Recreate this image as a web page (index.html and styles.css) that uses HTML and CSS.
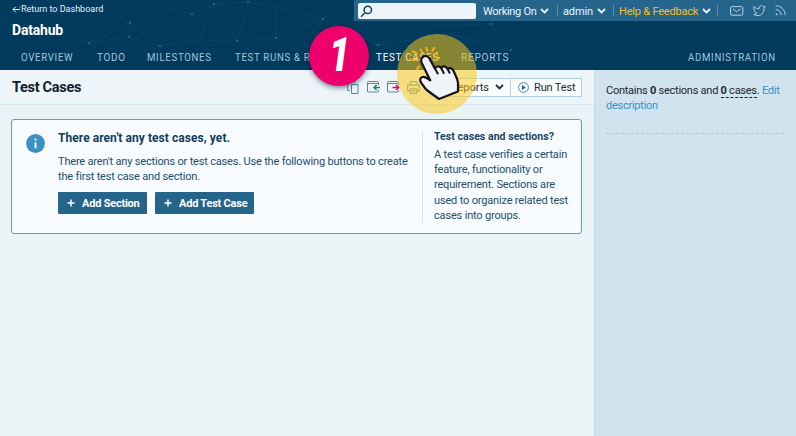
FILE: index.html
```html
<!DOCTYPE html>
<html lang="en">
<head>
<meta charset="utf-8">
<title>Test Cases - Datahub</title>
<link rel="stylesheet" href="styles.css">
</head>
<body>
<header class="header">
  <svg class="mesh" width="796" height="70" viewBox="0 0 796 70">
    <path d="M0 18L20 7 47 0M20 7L64 0 89 43 42 31 0 22M18 18L60 13 89 43 130 23 99 0M60 13L100 8 130 23 129 37 89 43M129 37L160 46 192 14 137 2 130 23 160 46M192 14L214 4 248 2 276 7 276 38 237 41 200 40 160 46M192 14L237 41 214 4 200 40M276 7L323 19 298 51 276 38 323 19 350 0M248 2L237 41 283 70 298 51M323 19L378 45 354 30M378 45L420 26 491 24 511 50 450 34 378 45M491 24L460 46"/>
    <g><circle cx="20" cy="7" r="1"/><circle cx="89" cy="43" r="1"/><circle cx="130" cy="23" r="1"/><circle cx="129" cy="37" r="1"/><circle cx="160" cy="46" r="1"/><circle cx="192" cy="14" r="1"/><circle cx="214" cy="4" r="1"/><circle cx="248" cy="2" r="1"/><circle cx="276" cy="38" r="1"/><circle cx="237" cy="41" r="1"/><circle cx="323" cy="19" r="1"/><circle cx="378" cy="45" r="1"/><circle cx="491" cy="24" r="1"/><circle cx="511" cy="50" r="1"/></g>
  </svg>
  <div class="head-row">
    <div class="brand">
      <a class="return"><svg width="8" height="7" viewBox="0 0 8 7"><path d="M8 3.5H1M3.8 .7L1 3.5l2.8 2.8"/></svg><span>Return to Dashboard</span></a>
      <div class="project">Datahub</div>
    </div>
    <div class="topbar">
      <div class="search"><svg width="13" height="13" viewBox="0 0 13 13"><circle cx="7.8" cy="4.9" r="3.7"/><path d="M5 7.8L1 11.8"/></svg></div>
      <div class="menu working"><span>Working On</span><svg class="chev" width="9" height="6" viewBox="0 0 9 6"><path d="M1 1l3.5 3.5L8 1"/></svg></div>
      <div class="menu admin"><span>admin</span><svg class="chev" width="9" height="6" viewBox="0 0 9 6"><path d="M1 1l3.5 3.5L8 1"/></svg></div>
      <div class="menu help"><span>Help &amp; Feedback</span><svg class="chev" width="9" height="6" viewBox="0 0 9 6"><path d="M1 1l3.5 3.5L8 1"/></svg></div>
      <div class="social">
        <svg width="14" height="10" viewBox="0 0 14 10"><rect x=".6" y=".6" width="12.2" height="8.6" rx="1.3"/><path d="M3 3l3.7 2.7L10.4 3"/></svg>
        <svg width="13" height="12" viewBox="0 0 13 12"><path d="M.9 1.4c1.4 1.8 3.1 2.4 5.1 2.4C5.6 1.5 7 .7 8.3.7c1 0 1.600.4 2.100 1l1.800-.3-1.200 2c.1 4.100-2.600 7.200-6.200 7.200-1.600 0-2.900-.4-4-1.200 1.400 0 2.400-.4 3.200-1.100C1.400 7.400.2 4.600.9 1.400z"/></svg>
        <svg width="11" height="11" viewBox="0 0 11 11"><path d="M.6.700c5.400 0 9.500 4.100 9.500 9.500M.6 4.600c3.200 0 5.600 2.400 5.600 5.600"/><circle cx="1.700" cy="9.300" r=".9"/></svg>
      </div>
    </div>
  </div>
  <nav class="nav">
    <a class="n1"><span>OVERVIEW</span></a><a class="n2"><span>TODO</span></a><a class="n3"><span>MILESTONES</span></a><a class="n4"><span>TEST RUNS &amp; RESULTS</span></a><a class="n5 active"><span>TEST CASES</span></a><a class="n6"><span>REPORTS</span></a><a class="n7"><span>ADMINISTRATION</span></a>
  </nav>
</header>
<div class="page">
  <main class="main">
    <div class="title-row">
      <h1>Test Cases</h1>
      <div class="tools">
        <svg width="12" height="13" viewBox="0 0 12 13"><path d="M4.500 3.500h6.500v9h-6.500zM2.800 9.500H.8V.7h7v1.200"/></svg>
        <svg width="13" height="12" viewBox="0 0 13 12"><path d="M11.500 4V1.500a1 1 0 0 0-1-1h-9a1 1 0 0 0-1 1v8.500a1 1 0 0 0 1 1h9a1 1 0 0 0 1-1V9M.5 2.500h11"/><path class="green" d="M13 6.500H7.500M9.600 4L7 6.500 9.600 9"/></svg>
        <svg width="13" height="12" viewBox="0 0 13 12"><path d="M11.500 4V1.500a1 1 0 0 0-1-1h-9a1 1 0 0 0-1 1v8.500a1 1 0 0 0 1 1h9a1 1 0 0 0 1-1V9M.5 2.500h11"/><path class="pink" d="M5.500 6.500h5.500M9 4l2.600 2.500L9 9"/></svg>
        <svg width="13" height="13" viewBox="0 0 13 13"><path d="M3 4V.700h7V4M3 10H.7V4h11.600v6H10M3 8h7v4.300H3zM4.500 10h4"/></svg>
      </div>
      <div class="actions">
        <button class="reports"><span>Reports</span><svg class="chev" width="9" height="6" viewBox="0 0 9 6"><path d="M1 1l3.500 3.500L8 1"/></svg></button>
        <button class="run"><svg width="11" height="11" viewBox="0 0 11 11"><circle cx="5.500" cy="5.500" r="4.900"/><path d="M4 3l3.800 2.500L4 8z"/></svg><span>Run Test</span></button>
      </div>
    </div>
    <section class="notice">
      <svg class="info" width="19" height="19" viewBox="0 0 19 19"><circle cx="9.500" cy="9.500" r="9.400"/><path d="M9.500 8.300v6"/><path d="M9.500 4.600v1.900"/></svg>
      <div class="notice-body">
        <h2>There aren't any test cases, yet.</h2>
        <p>There aren't any sections or test cases. Use the following buttons to create<br>the first test case and section.</p>
        <div class="buttons">
          <button class="add-section"><svg width="8" height="8" viewBox="0 0 8 8"><path d="M4 .5v7M.5 4h7"/></svg><span>Add Section</span></button>
          <button class="add-case"><svg width="8" height="8" viewBox="0 0 8 8"><path d="M4 .5v7M.5 4h7"/></svg><span>Add Test Case</span></button>
        </div>
      </div>
      <aside class="hint">
        <h3>Test cases and sections?</h3>
        <p>A test case verifies a certain<br>feature, functionality or<br>requirement. Sections are<br>used to organize related test<br>cases into groups.</p>
      </aside>
    </section>
  </main>
  <aside class="sidebar">
    <p>Contains <b>0</b> sections and <span class="count"><b>0</b> cases</span>. <a>Edit<br>description</a></p>
  </aside>
</div>
<div class="halo"></div>
<svg class="pointer" width="50" height="56" viewBox="0 0 50 56">
  <path class="spark" d="M9 2l3 4M15 0l1.500 4.500M23.500 0L21 4.500M29 11l-5.500-1M1 4l5.500 3M1 13h5.500M5.500 22.500L8.500 19M27 5l-4 2.500"/>
  <path class="hand" d="M12.500 9.500c2.400-1.300 5-.1 6 2.100l5.500 10c.5-2.200 4.100-3.300 6.200-.5 1.100-2.600 4.800-2.300 6.200.7 2.200-1.500 5.100-.5 6.300 2.500l3.500 8c1.600 4 .7 7.500.7 12.200L28 52 15.700 43c-2.300-2-3.500-4.700-5.200-6.800-2-2.800-1.600-5 .4-6 2.300-1.200 4.700.6 8.400 3.200L11 16.500c-1.200-2.500-1-5.600 1.500-7z"/>
  <path class="finger" d="M24 21.500l2.700 5M30.200 21l2.500 5M36.500 21.800l2 4"/>
</svg>
<div class="step"><span>1</span></div>
</body>
</html>
```
FILE: styles.css
```css
* { box-sizing: border-box; margin: 0; padding: 0; }
body { width: 796px; height: 436px; overflow: hidden; position: relative; background: #eaf3f6; font: 11px/15px Roboto, "Liberation Sans", sans-serif; color: #22506c; white-space: nowrap; }
svg { fill: none; stroke: currentColor; flex: none; display: block; }
button { font: inherit; color: inherit; display: flex; align-items: center; }
.header { position: relative; height: 70px; background: #003a5d; color: #fff; }
.mesh { position: absolute; left: 0; top: 0; stroke: #235c79; stroke-width: .5; opacity: .55; }
.mesh g { fill: #5c91ab; stroke: none; }
.head-row { position: relative; display: flex; justify-content: space-between; height: 44px; }
.brand { padding: 3px 0 0 12px; }
.return { display: flex; align-items: center; gap: 1px; font-size: 9px; line-height: 13px; color: #e4f1f8; }
.project { font-size: 14px; font-weight: 700; line-height: 18px; margin-top: 5px; letter-spacing: -.2px; }
.topbar { display: flex; align-items: center; width: 442px; height: 21px; background: #25658c; color: #eaf4f9; padding-left: 4px; }
.search { width: 118px; height: 16px; border-radius: 2px; background: #edf5f9; color: #123f5c; padding: 2px 0 0 2px; stroke-width: 1.5; }
.chev { stroke-width: 1.8; }
.menu { display: flex; align-items: center; justify-content: space-between; height: 13px; line-height: 13px; letter-spacing: -.3px; border-right: 1px solid #5c8ba8; }
.menu span { position: relative; top: 1px; }
.working { width: 75px; margin-left: 7px; padding-right: 8px; }
.admin { width: 51px; margin-left: 5px; padding-right: 7px; letter-spacing: -.15px; }
.help { width: 99px; margin-left: 5px; padding-right: 6px; letter-spacing: -.2px; }
.help span { color: #fabd17; }
.social { display: flex; align-items: center; gap: 9px; margin-left: 12px; color: #b5d3e3; }
.social circle { fill: currentColor; stroke: none; }
.nav { position: relative; display: flex; height: 26px; line-height: 27px; padding-left: 21px; letter-spacing: .8px; color: #a5c5d8; }
.nav span { display: inline-block; transform: scaleX(.875); transform-origin: left; }
.n1 { width: 76px; } .n2 { width: 50px; } .n3 { width: 88px; } .n4 { width: 141px; } .n5 { width: 85px; } .n6 { width: 227px; }
.nav .n6 span { transform: scaleX(.92); }
.nav .n5 span, .nav .n2 span { transform: scaleX(.9); }
.active { color: #fff; }
.page { display: flex; height: 366px; }
.main { width: 595px; border-right: 1px solid #bdd9ec; }
.title-row { display: flex; align-items: center; height: 35px; padding: 0 12px; background: #edf5f8; border-bottom: 1px solid #d2e6f3; }
h1 { font-size: 14.5px; line-height: 18px; font-weight: 700; color: #11212e; flex: 1; letter-spacing: -.3px; padding-top: 2px; }
.tools { display: flex; align-items: center; gap: 7.2px; color: #5386a4; margin-right: 10px; }
.green { stroke: #129064; stroke-width: 1.6; }
.pink { stroke: #ed006b; stroke-width: 1.6; }
.actions { display: flex; height: 19px; border: 1px solid #b2d3e6; background: #fafcfe; color: #232a31; }
.actions button { border: 0; background: none; }
.reports { width: 79px; padding: 0 6px 0 0; justify-content: flex-end; gap: 6px; }
.actions .run { width: 71px; border-left: 1px solid #b2d3e6; padding-left: 7px; gap: 5px; letter-spacing: -.15px; }
.run svg { color: #3c8dbb; }
.run svg path { fill: #22618b; stroke: none; }
.notice { display: flex; width: 571px; height: 115px; margin: 14px 0 0 11px; border: 1px solid #5a9fc5; border-radius: 3px; background: #f8fbff; }
.info { margin: 14px 0 0 14px; fill: #3c91c3; stroke: none; }
.info path { stroke: #e8f5fb; stroke-width: 2; }
.notice-body { width: 377px; padding: 10px 0 0 13px; }
h2 { font-size: 12px; line-height: 16px; color: #123f5c; font-weight: 700; letter-spacing: .06px; }
.notice-body p { margin-top: 8px; letter-spacing: -.18px; }
.buttons { display: flex; gap: 8px; margin-top: 8px; }
.buttons button { height: 22px; border: 0; border-radius: 1px; background: #25658c; color: #fff; font-weight: 700; padding-left: 9px; gap: 7px; letter-spacing: -.22px; }
.buttons svg { stroke-width: 1.5; }
.add-section { width: 89px; } .add-case { width: 99px; }
.hint { height: 92px; margin-top: 11px; border-left: 1px solid #dee3e7; padding-left: 11px; }
h3 { font-size: 10.5px; line-height: 12px; margin-bottom: 4px; color: #174766; letter-spacing: .05px; }
.hint p { line-height: 15.2px; letter-spacing: -.17px; }
.sidebar { width: 201px; background: #d0e3ef; padding: 13px 12px 0 11px; }
.sidebar p { color: #22282d; height: 51px; border-bottom: 1px dashed #b2cad8; letter-spacing: -.25px; }
.sidebar a { color: #3b92c5; }
.count { border-bottom: 1px dashed #222; }
.halo { position: absolute; left: 397px; top: 34px; width: 80px; height: 80px; border-radius: 50%; background: rgba(253, 201, 20, .53); }
.pointer { position: absolute; left: 411px; top: 47px; }
.spark { stroke: #fbb016; stroke-width: 2; }
.hand { fill: #f1f5fa; stroke: #17131d; stroke-width: 2.2; stroke-linejoin: round; }
.finger { stroke: #17131d; stroke-width: 2; stroke-linecap: round; }
.step { position: absolute; left: 309px; top: 26px; width: 60px; height: 60px; border-radius: 50%; background: #ed006c; color: #fff; font: italic 900 48px/57px Roboto, sans-serif; text-align: center; box-shadow: 0 2px 5px rgba(0, 20, 45, .5); }
.step span { display: inline-block; transform: scaleX(.78); }
```
